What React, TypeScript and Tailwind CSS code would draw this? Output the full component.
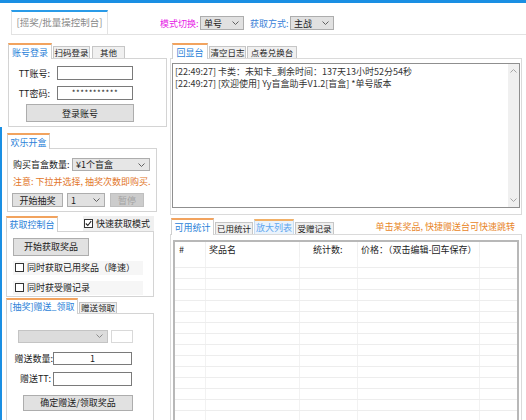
import React from "react";

const Chev = ({ up = false, color = "#606060" }: { up?: boolean; color?: string }) => (
  <svg width="7" height="4" viewBox="0 0 7 4">
    <polyline
      points={up ? "0.5,3.5 3.5,0.5 6.5,3.5" : "0.5,0.5 3.5,3.5 6.5,0.5"}
      fill="none"
      stroke={color}
      strokeWidth="1"
    />
  </svg>
);

function Tab({
  label,
  kind = "off",
  className = "",
}: {
  label: string;
  kind?: "on" | "off" | "hl";
  className?: string;
}) {
  if (kind === "on")
    return (
      <div
        className={`relative -mb-px bg-white border-x border-t-2 border-[#cfcfcf] border-t-[#f2a35e] text-[#2a7fd8] flex items-center justify-center whitespace-nowrap ${className}`}
      >
        {label}
      </div>
    );
  if (kind === "hl")
    return (
      <div
        className={`bg-[#eaf3fc] border border-b-0 border-[#c9dcef] border-t-2 border-t-[#f2b066] text-[#5ea6ee] flex items-center justify-center whitespace-nowrap ${className}`}
      >
        {label}
      </div>
    );
  return (
    <div
      className={`bg-[#f0f0f0] border border-b-0 border-[#c6c6c6] text-[#1b1b1b] flex items-center justify-center whitespace-nowrap text-[8.5px] ${className}`}
    >
      {label}
    </div>
  );
}

function Select({ text, className = "" }: { text: string; className?: string }) {
  return (
    <div
      className={`bg-[#e1e1e1] border border-[#adadad] flex items-center justify-between pl-[3px] pr-[4px] ${className}`}
    >
      <span>{text}</span>
      <Chev />
    </div>
  );
}

function Btn({ children, className = "" }: { children: React.ReactNode; className?: string }) {
  return (
    <div
      className={`bg-[#e1e1e1] border border-[#adadad] flex items-center justify-center whitespace-nowrap ${className}`}
    >
      {children}
    </div>
  );
}

const Check = ({ checked = false }: { checked?: boolean }) => (
  <div className="w-[9px] h-[9px] border border-[#333] bg-white flex items-center justify-center shrink-0">
    {checked && (
      <svg width="7" height="7" viewBox="0 0 7 7">
        <polyline points="0.8,3.5 2.8,5.5 6.2,1.2" fill="none" stroke="#222" strokeWidth="1.1" />
      </svg>
    )}
  </div>
);

export default function App() {
  const rows = Array.from({ length: 15 });
  return (
    <div className="w-[526px] h-[420px] overflow-hidden bg-white text-[9px] leading-none text-[#1b1b1b] font-['Noto_Sans_CJK_SC','Noto_Sans',sans-serif]">
      <div className="h-[3px] bg-[#1a8fe3]" />
      {/* header */}
      <div className="flex items-start h-[32px] ml-[11px] border-b border-[#e2e2e2]">
        <div className="mt-[7px] w-[97px] h-[24px] border-x border-[#e3e3e3] border-t-2 border-t-[#2a9be8] flex items-center justify-center text-[#8a8a8a] text-[9.5px] whitespace-nowrap">
          [摇奖/批量操控制台]
        </div>
        <div className="ml-[52px] mt-[13px] flex items-center">
          <span className="text-[#e619e6] w-[40px] whitespace-nowrap">模式切换:</span>
          <Select className="w-[44px] h-[14px]" text="单号" />
          <span className="ml-[6px] w-[40px] text-[#3a82d8] whitespace-nowrap">获取方式:</span>
          <Select className="w-[44px] h-[14px]" text="主战" />
        </div>
      </div>

      <div className="flex mt-[8px]">
        {/* left column */}
        <div className="w-[167px] flex flex-col">
          <div className="ml-[8px] flex flex-col">
            <div className="flex items-end h-[15px]">
              <Tab kind="on" label="账号登录" className="w-[44px] h-[16px]" />
              <Tab label="扫码登录" className="ml-[1px] w-[37px] h-[12px]" />
              <Tab label="其他" className="ml-[2px] w-[33px] h-[12px]" />
            </div>
            <div className="w-[159px] h-[69px] border border-[#d4d4d4] flex flex-col">
              <div className="flex items-center mt-[7px]">
                <span className="w-[41px] text-right">TT账号:</span>
                <div className="ml-[7px] w-[76px] h-[14px] border border-[#7a7a7a] bg-white" />
              </div>
              <div className="flex items-center mt-[6px]">
                <span className="w-[41px] text-right">TT密码:</span>
                <div className="ml-[7px] w-[76px] h-[14px] border border-[#7a7a7a] bg-white flex items-center justify-center text-[8px] tracking-[0.5px]">
                  ***********
                </div>
              </div>
              <Btn className="mt-[4px] ml-[17px] w-[108px] h-[18px]">登录账号</Btn>
            </div>
          </div>

          <div className="border-l-2 border-[#1a8fe3] h-[300px] flex flex-col">
            {/* 欢乐开盒 */}
            <div className="mt-[6px] ml-[5px] flex items-end h-[15px]">
              <Tab kind="on" label="欢乐开盒" className="w-[43px] h-[16px]" />
            </div>
            <div className="ml-[5px] w-[150px] h-[67px] border border-[#d4d4d4] flex flex-col">
              <div className="flex items-center mt-[9px] ml-[5px]">
                <span className="w-[59px] whitespace-nowrap">购买盲盒数量:</span>
                <Select className="w-[78px] h-[13px] bg-[#e6e6e6]" text="¥1个盲盒" />
              </div>
              <div className="mt-[6px] ml-[5px] text-[#e2762a] whitespace-nowrap">
                注意: 下拉并选择, 抽奖次数即购买.
              </div>
              <div className="mt-[7px] ml-[4px] flex items-center">
                <Btn className="w-[51px] h-[14px]">开始抽奖</Btn>
                <Select className="ml-[4px] w-[38px] h-[14px]" text="1" />
                <div className="ml-[5px] w-[34px] h-[14px] bg-[#cccccc] border border-[#bfbfbf] text-[#a3a3a3] flex items-center justify-center">
                  暂停
                </div>
              </div>
            </div>

            {/* 获取控制台 */}
            <div className="mt-[4px] ml-[4px] flex items-end h-[15px]">
              <Tab kind="on" label="获取控制台" className="w-[52px] h-[16px]" />
              <div className="ml-[25px] w-[71px] h-[15px] bg-[#f0f0f0] flex items-center pl-[1px] gap-[3px] whitespace-nowrap">
                <Check checked />
                <span>快速获取模式</span>
              </div>
            </div>
            <div className="ml-[4px] w-[148px] h-[69px] border border-[#d4d4d4] flex flex-col">
              <Btn className="mt-[6px] ml-[6px] w-[76px] h-[18px]">开始获取奖品</Btn>
              <div className="mt-[5px] ml-[6px] w-[130px] h-[14px] bg-[#f6f6f6] flex items-center pl-[2px] gap-[3px] whitespace-nowrap">
                <Check />
                <span>同时获取已用奖品（降速）</span>
              </div>
              <div className="mt-[6px] ml-[6px] w-[130px] h-[14px] bg-[#f6f6f6] flex items-center pl-[2px] gap-[3px] whitespace-nowrap">
                <Check />
                <span>同时获受赠记录</span>
              </div>
            </div>

            {/* 赠送 */}
            <div className="mt-[1px] ml-[4px] flex items-end h-[15px]">
              <Tab kind="on" label="[抽奖]赠送_领取" className="w-[72px] h-[16px]" />
              <Tab label="赠送领取" className="ml-[1px] w-[38px] h-[11px]" />
            </div>
            <div className="ml-[4px] w-[148px] h-[120px] border border-[#d4d4d4] flex flex-col">
              <div className="mt-[16px] ml-[11px] flex items-center">
                <div className="w-[90px] h-[13px] bg-[#dcdcdc] border border-[#c4c4c4] flex items-center justify-end pr-[4px]">
                  <Chev color="#8a8a8a" />
                </div>
                <div className="ml-[3px] w-[22px] h-[13px] border border-[#d9d9d9] bg-white" />
              </div>
              <div className="mt-[9px] flex items-center">
                <span className="w-[46px] text-right whitespace-nowrap">赠送数量:</span>
                <div className="w-[79px] h-[13px] border border-[#7a7a7a] bg-white flex items-center justify-center">
                  1
                </div>
              </div>
              <div className="mt-[7px] flex items-center">
                <span className="w-[44px] text-right mr-[2px] whitespace-nowrap">赠送TT:</span>
                <div className="w-[79px] h-[14px] border border-[#7a7a7a] bg-white" />
              </div>
              <Btn className="mt-[9px] ml-[16px] w-[110px] h-[16px]">确定赠送/领取奖品</Btn>
            </div>
          </div>
        </div>

        {/* right column */}
        <div className="ml-[3px] w-[352px] flex flex-col">
          <div className="flex items-end h-[15px]">
            <Tab kind="on" label="回显台" className="ml-[2px] w-[36px] h-[16px]" />
            <Tab label="清空日志" className="ml-[1px] w-[37px] h-[12px]" />
            <Tab label="点卷兑换台" className="ml-[1px] w-[50px] h-[12px]" />
          </div>
          <div className="w-[352px] h-[157px] border border-[#dadada] flex flex-col">
            <div className="mt-[4px] mx-[1px] h-[145px] border border-[#8f8f8f] flex">
              <div className="flex-1 pt-[2px] pl-[2px] leading-[12px] text-[#333] whitespace-nowrap">
                <div>[22:49:27] 卡类：未知卡_剩余时间：137天13小时52分54秒</div>
                <div>[22:49:27] [欢迎使用] Yy盲盒助手V1.2[盲盒] *单号版本</div>
              </div>
              <div className="w-[11px] bg-[#f0f0f0] flex flex-col justify-between items-center py-[5px]">
                <Chev up color="#a6a6a6" />
                <Chev color="#a6a6a6" />
              </div>
            </div>
          </div>

          <div className="mt-[3px] flex items-end h-[16px]">
            <Tab kind="on" label="可用统计" className="ml-[1px] w-[43px] h-[17px]" />
            <Tab label="已用统计" className="ml-[1px] w-[38px] h-[12px]" />
            <Tab kind="hl" label="放大列表" className="ml-[1px] w-[40px] h-[15px]" />
            <Tab label="受赠记录" className="ml-[1px] w-[39px] h-[12px]" />
            <span className="ml-auto mr-[7px] self-center text-[#e8862a] whitespace-nowrap">
              单击某奖品, 快捷赠送台可快速跳转
            </span>
          </div>
          <div className="w-[352px] h-[200px] border border-[#dadada] flex flex-col">
            <div className="mt-[5px] ml-[2px] w-[346px] h-[190px] border-2 border-b-0 border-[#b8b8b8] bg-white">
              <div className="grid grid-cols-[31px_94px_58px_122px_37px] h-[15px]">
                <div className="border-r border-[#f0f0f0] flex items-center pl-[4px]">#</div>
                <div className="border-r border-[#f0f0f0] flex items-center pl-[3px]">奖品名</div>
                <div className="border-r border-[#f0f0f0] flex items-center pl-[13px] whitespace-nowrap">统计数:</div>
                <div className="border-r border-[#f0f0f0] flex items-center pl-[3px] whitespace-nowrap">
                  价格：（双击编辑-回车保存）
                </div>
                <div />
              </div>
              {rows.map((_, i) => (
                <div
                  key={i}
                  className="grid grid-cols-[31px_94px_58px_122px_37px] h-[11px] border-b border-[#ededed]"
                >
                  <div className="border-r border-[#f2f2f2]" />
                  <div className="border-r border-[#f2f2f2]" />
                  <div className="border-r border-[#f2f2f2]" />
                  <div className="border-r border-[#f2f2f2]" />
                  <div />
                </div>
              ))}
            </div>
          </div>
        </div>
      </div>
    </div>
  );
}
